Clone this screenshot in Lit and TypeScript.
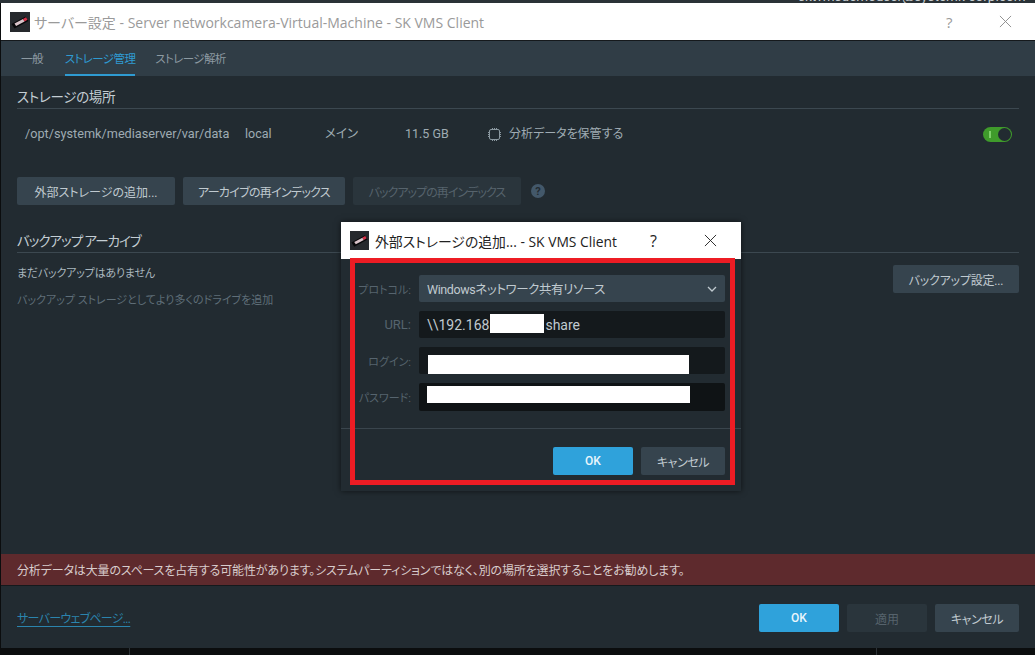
import { LitElement, css, html } from 'lit';
import { customElement } from 'lit/decorators.js';

const logo = (size: number) => html`
  <svg class="logo" width=${size} height=${size} viewBox="0 0 20 20">
    <rect width="20" height="20" fill="#26292d"></rect>
    <path d="M1.5 12 L15.5 4.5 L18.5 9 L4.5 16.5 Z" fill="#08080a"></path>
    <path d="M4.5 11.6 L13 7 L14.6 9.4 L6.1 14 Z" fill="#d9c3c9"></path>
    <path d="M13 6.9 L16 5.3 L17.5 7.7 L14.6 9.4 Z" fill="#d8324a"></path>
  </svg>
`;

const closeIcon = (color: string, size: number) => html`
  <svg width=${size} height=${size} viewBox="0 0 14 14">
    <path d="M1 1 L13 13 M13 1 L1 13" stroke=${color} stroke-width="1" fill="none"></path>
  </svg>
`;

@customElement('app-root')
export class AppRoot extends LitElement {
  static styles = css`
    :host {
      display: block;
      position: relative;
      width: 1035px;
      height: 655px;
      overflow: hidden;
      background: #0b0d0e;
      font-family: "Roboto", "Noto Sans CJK JP", sans-serif;
      font-size: 12px;
      font-feature-settings: "palt";
      color: #a9b6be;
    }
    .strip {
      height: 3px;
      overflow: hidden;
      background: #2a3237;
      position: relative;
    }
    .strip span {
      position: absolute;
      left: 798px;
      top: -12px;
      font-size: 13.5px;
      line-height: 16px;
      color: #c8ced2;
    }
    .window {
      height: 645px;
      margin-left: 1px;
      display: flex;
      flex-direction: column;
      background: #222b31;
    }
    .titlebar {
      height: 37px;
      flex: none;
      display: flex;
      align-items: center;
      background: #fff;
      border-bottom: 1px solid #15191c;
      padding-left: 9px;
      font-family: "Open Sans", "Noto Sans CJK JP", sans-serif;
      font-size: 14px;
      color: #9a9a9a;
    }
    .titlebar .logo { margin-right: 4px; }
    .titlebar .help { margin-left: auto; width: 14px; font-size: 15px; }
    .titlebar .close { display: flex; margin: 0 23px 0 39px; }
    .tabs {
      height: 35px;
      flex: none;
      display: flex;
      gap: 20px;
      padding-left: 20px;
      background: #303d46;
      font-size: 11.5px;
      letter-spacing: -0.6px;
    }
    .tab {
      display: flex;
      align-items: center;
      height: 33px;
      border-bottom: 2px solid transparent;
      color: #8d9aa2;
    }
    .tab:first-child { margin-right: 2px; }
    .tab.active {
      color: #2f9bd2;
      border-bottom-color: #2f9bd2;
    }
    .content {
      flex: 1;
      padding: 0 16px;
      display: flex;
      flex-direction: column;
    }
    .head {
      height: 33px;
      flex: none;
      box-sizing: border-box;
      display: flex;
      align-items: flex-end;
      padding-bottom: 2px;
      border-bottom: 1px solid #3c4850;
      font-size: 13.5px;
      letter-spacing: -0.3px;
      color: #c4ced4;
    }
    .head.section2 { margin-top: 15px; letter-spacing: -1px; }
    .row {
      height: 48px;
      flex: none;
      box-sizing: border-box;
      display: grid;
      grid-template-columns: 220px 80px 80px 83px 1fr 36px;
      align-items: center;
      padding: 2px 0 0 8px;
      font-size: 12.5px;
      line-height: 16px;
      color: #9fabb3;
    }
    .path { font-size: 12.7px; }
    .analytics { display: flex; align-items: center; gap: 8px; font-size: 12px; }
    .toggle {
      width: 29px;
      height: 15px;
      box-sizing: border-box;
      border-radius: 8px;
      background: #3f9b2b;
      display: flex;
      align-items: center;
      justify-content: space-between;
      padding: 0 0 0 6px;
    }
    .toggle i { width: 2px; height: 7px; background: #7fd06a; }
    .toggle b {
      width: 13px;
      height: 13px;
      margin-right: 1px;
      border-radius: 50%;
      background: #222b31;
    }
    .actions {
      margin-top: 20px;
      display: flex;
      gap: 8px;
      align-items: center;
      flex: none;
    }
    .btn {
      height: 28px;
      box-sizing: border-box;
      display: flex;
      align-items: center;
      justify-content: center;
      border-radius: 2px;
      background: #36444e;
      color: #c0cad0;
      font-size: 12px;
    }
    .btn.primary { background: #2fa2db; color: #eaf6fc; font-weight: 500; }
    .btn.disabled { background: #2a353c; color: #56636c; }
    .tight { letter-spacing: -0.4px; }
    .w-add { width: 158px; }
    .w-reindex { width: 162px; letter-spacing: -0.7px; }
    .w-backup { width: 168px; letter-spacing: -0.95px; }
    .w-settings { width: 126px; letter-spacing: -0.2px; }
    .w-80 { width: 80px; }
    .w-84 { width: 84px; }
    .hint {
      width: 14px;
      height: 14px;
      margin-left: 2px;
      border-radius: 50%;
      background: #43586a;
      color: #222b31;
      font-size: 11px;
      font-weight: 700;
      display: flex;
      align-items: center;
      justify-content: center;
    }
    .backup {
      display: flex;
      justify-content: space-between;
      padding-top: 12px;
    }
    .backup p { margin: 0; font-size: 11px; line-height: 18px; letter-spacing: -0.2px; color: #a9b6be; }
    .backup p + p { margin-top: 9px; letter-spacing: 0; color: #5f6e78; }
    .banner {
      margin: auto -16px 0;
      height: 31px;
      flex: none;
      display: flex;
      align-items: center;
      padding-left: 16px;
      background: #5e2a2d;
      color: #d8cccc;
      letter-spacing: -0.15px;
      border-bottom: 1px solid #15191c;
    }
    .footer {
      height: 62px;
      flex: none;
      box-sizing: border-box;
      display: flex;
      gap: 8px;
      align-items: flex-start;
      padding-top: 18px;
    }
    .link {
      margin-right: auto;
      margin-top: 5px;
      color: #2b84ad;
      letter-spacing: -0.7px;
      text-decoration: underline;
      text-underline-offset: 3px;
    }
    .dialog {
      position: absolute;
      left: 341px;
      top: 222px;
      width: 400px;
      height: 269px;
      background: #222b31;
      box-shadow: 0 0 6px rgba(0, 0, 0, 0.6);
    }
    .dlg-title {
      height: 37px;
      display: flex;
      align-items: center;
      padding-left: 9px;
      background: #fff;
      font-family: "Open Sans", "Noto Sans CJK JP", sans-serif;
      font-size: 13.85px;
      color: #222;
    }
    .dlg-title .logo { margin-right: 6px; }
    .dlg-title .help { margin-left: auto; font-size: 16px; }
    .dlg-title .close { display: flex; margin: 0 24px 0 47px; }
    .form {
      padding: 16px 16px 0 0;
      display: grid;
      grid-template-columns: 70px 306px;
      row-gap: 9px;
      column-gap: 8px;
      align-items: center;
    }
    .form label { text-align: right; font-size: 11px; color: #56646e; }
    .form label.latin { font-size: 13px; }
    .field {
      height: 27px;
      box-sizing: border-box;
      display: flex;
      align-items: center;
      padding-left: 8px;
      border-radius: 2px;
      background: #14191c;
      color: #c0cad0;
      font-size: 14px;
    }
    .field.select {
      background: #36444e;
      justify-content: space-between;
      padding-right: 8px;
      font-size: 12.5px;
      letter-spacing: -0.4px;
    }
    .field.focus { background: #0f1315; height: 28px; }
    .gap { width: 56px; }
    .rule { margin-top: 17px; border-top: 1px solid #3a454d; }
    .dlg-actions {
      display: flex;
      justify-content: flex-end;
      gap: 8px;
      padding: 18px 16px 0 0;
    }
    .mask { position: absolute; background: #fff; }
    .m-url { left: 149px; top: 92px; width: 54px; height: 19px; }
    .m-login { left: 87px; top: 133px; width: 261px; height: 19px; }
    .m-pass { left: 86px; top: 164px; width: 263px; height: 17px; }
    .outline {
      position: absolute;
      left: 9px;
      top: 36px;
      width: 385px;
      height: 227px;
      box-sizing: border-box;
      border: 5px solid #ed1c24;
    }
    .dividers {
      position: absolute;
      left: 0;
      right: 0;
      bottom: 0;
      height: 7px;
      display: flex;
      gap: 746px;
      padding-left: 129px;
    }
    .dividers i { width: 1px; background: #2c3236; }
  `;

  render() {
    return html`
      <div class="strip"><span>sktvmsdemouser@systemk-corp.com</span></div>
      <div class="window">
        <div class="titlebar">
          ${logo(20)}
          <span>サーバー設定 - Server networkcamera-Virtual-Machine - SK VMS Client</span>
          <span class="help">?</span>
          <span class="close">${closeIcon('#8a8a8a', 13)}</span>
        </div>
        <div class="tabs">
          <div class="tab">一般</div>
          <div class="tab active">ストレージ管理</div>
          <div class="tab">ストレージ解析</div>
        </div>
        <div class="content">
          <div class="head">ストレージの場所</div>
          <div class="row">
            <span class="path">/opt/systemk/mediaserver/var/data</span>
            <span>local</span>
            <span>メイン</span>
            <span>11.5 GB</span>
            <span class="analytics">
              <svg width="13" height="13" viewBox="0 0 13 13" fill="none" stroke="#8b98a0" stroke-width="1">
                <rect x="1.5" y="1.5" width="10" height="10" rx="1.5"></rect>
                <path d="M4.5 0v1M6.5 0v1M8.5 0v1M4.5 12v1M6.5 12v1M8.5 12v1M0 4.5h1M0 6.5h1M0 8.5h1M12 4.5h1M12 6.5h1M12 8.5h1"></path>
              </svg>
              分析データを保管する
            </span>
            <span class="toggle"><i></i><b></b></span>
          </div>
          <div class="actions">
            <div class="btn w-add">外部ストレージの追加...</div>
            <div class="btn w-reindex">アーカイブの再インデックス</div>
            <div class="btn disabled w-backup">バックアップの再インデックス</div>
            <div class="hint">?</div>
          </div>
          <div class="head section2">バックアップ アーカイブ</div>
          <div class="backup">
            <div>
              <p>まだバックアップはありません</p>
              <p>バックアップ ストレージとしてより多くのドライブを追加</p>
            </div>
            <div class="btn w-settings">バックアップ設定...</div>
          </div>
          <div class="banner">分析データは大量のスペースを占有する可能性があります。システムパーティションではなく、別の場所を選択することをお勧めします。</div>
          <div class="footer">
            <span class="link">サーバーウェブページ...</span>
            <div class="btn primary w-80">OK</div>
            <div class="btn disabled w-80">適用</div>
            <div class="btn tight w-84">キャンセル</div>
          </div>
        </div>
      </div>
      <div class="dividers"><i></i><i></i></div>

      <div class="dialog">
        <div class="dlg-title">
          ${logo(19)}
          <span>外部ストレージの追加... - SK VMS Client</span>
          <span class="help">?</span>
          <span class="close">${closeIcon('#222', 13)}</span>
        </div>
        <div class="form">
          <label>プロトコル:</label>
          <div class="field select">
            Windowsネットワーク共有リソース
            <svg width="10" height="6" viewBox="0 0 10 6" fill="none" stroke="#c0cad0" stroke-width="1.3">
              <path d="M1 1 L5 5 L9 1"></path>
            </svg>
          </div>
          <label class="latin">URL:</label>
          <div class="field">\\\\192.168<span class="gap"></span>share</div>
          <label>ログイン:</label>
          <div class="field"></div>
          <label>パスワード:</label>
          <div class="field focus"></div>
        </div>
        <div class="rule"></div>
        <div class="dlg-actions">
          <div class="btn primary w-80">OK</div>
          <div class="btn tight w-84">キャンセル</div>
        </div>
        <div class="mask m-url"></div>
        <div class="mask m-login"></div>
        <div class="mask m-pass"></div>
        <div class="outline"></div>
      </div>
    `;
  }
}
